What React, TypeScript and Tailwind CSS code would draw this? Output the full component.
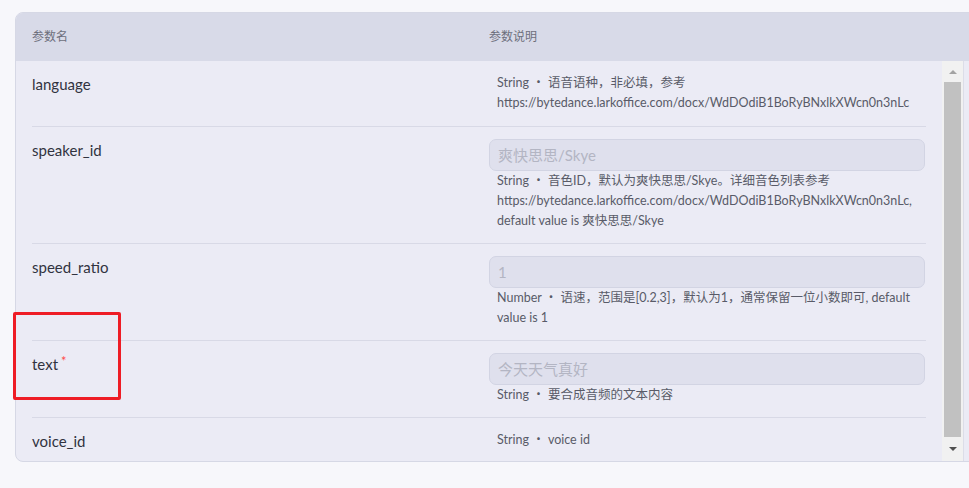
const rows = [
  {
    name: 'language',
    required: false,
    placeholder: '',
    desc: ['String ・ 语音语种，非必填，参考', 'https://bytedance.larkoffice.com/docx/WdDOdiB1BoRyBNxlkXWcn0n3nLc'],
  },
  {
    name: 'speaker_id',
    required: false,
    placeholder: '爽快思思/Skye',
    desc: [
      'String ・ 音色ID，默认为爽快思思/Skye。详细音色列表参考',
      'https://bytedance.larkoffice.com/docx/WdDOdiB1BoRyBNxlkXWcn0n3nLc,',
      'default value is 爽快思思/Skye',
    ],
  },
  {
    name: 'speed_ratio',
    required: false,
    placeholder: '1',
    desc: ['Number ・ 语速，范围是[0.2,3]，默认为1，通常保留一位小数即可, default', 'value is 1'],
  },
  {
    name: 'text',
    required: true,
    placeholder: '今天天气真好',
    desc: ['String ・ 要合成音频的文本内容'],
  },
  {
    name: 'voice_id',
    required: false,
    placeholder: '',
    desc: ['String ・ voice id'],
  },
]

export default function App() {
  return (
    <div className="relative h-[488px] overflow-hidden bg-[#f7f7fb] pt-[12px] pl-[15px] font-['Lato','Noto_Sans_CJK_SC',sans-serif]">
      <div className="w-[990px] overflow-hidden rounded-l-lg border border-[#d6d8e5] bg-[#ebebf5]">
        {/* header */}
        <div className="flex h-[48px] items-center bg-[#d8dae8] px-[16px] text-[12px] text-[#6d6f7c]">
          <div className="w-[457px]">参数名</div>
          <div>参数说明</div>
        </div>

        {/* body */}
        <div className="flex h-[400px]">
          <div className="w-[926px] px-[16px]">
            {rows.map((row, i) => (
              <div
                key={row.name}
                className={`flex pt-[12px] ${i === 0 ? 'pb-[13px]' : 'pb-[12px]'} ${
                  i < rows.length - 1 ? 'border-b border-[#d8d9e6]' : ''
                }`}
              >
                <div className="w-[457px] text-[15px] leading-[22px] text-[#31333f]">
                  {row.name}
                  {row.required && (
                    <span className="relative top-[-4px] ml-[3px] text-[13px] text-[#ff4b4b]">*</span>
                  )}
                </div>
                <div className="w-[436px]">
                  {row.placeholder && (
                    <div className="flex h-[32px] items-center rounded-[7px] border border-[#d2d4e3] bg-[#dfe0ed] px-[8px] text-[15px] text-[#b3b5c3]">
                      {row.placeholder}
                    </div>
                  )}
                  <div className="pl-[8px] text-[12.5px] leading-[20px] text-[#595b68]">
                    {row.desc.map((line) => (
                      <div key={line} className="whitespace-nowrap">
                        {line}
                      </div>
                    ))}
                  </div>
                </div>
              </div>
            ))}
          </div>

          {/* scrollbar */}
          <div className="flex w-[21px] flex-col bg-[#f1f1f1]">
            <div className="flex h-[21px] items-center justify-center">
              <div className="h-0 w-0 border-x-[4px] border-b-[4px] border-x-transparent border-b-[#a3a3a3]" />
            </div>
            <div className="ml-[2px] h-[355px] w-[17px] bg-[#c1c1c1]" />
            <div className="flex flex-1 items-center justify-center">
              <div className="h-0 w-0 border-x-[4px] border-t-[4px] border-x-transparent border-t-[#505050]" />
            </div>
          </div>
          <div className="flex-1 border-l border-[#dcdde8]" />
        </div>
      </div>

      {/* annotation box */}
      <div className="absolute left-[13px] top-[312px] h-[88px] w-[108px] rounded-[2px] border-[3px] border-[#ee1c25]" />
    </div>
  )
}
